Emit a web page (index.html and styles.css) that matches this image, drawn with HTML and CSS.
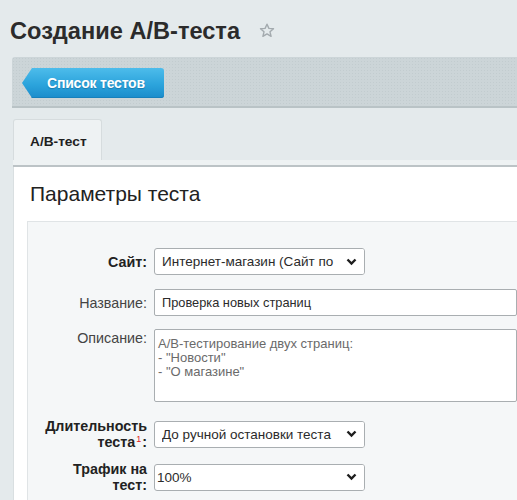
FILE: index.html
```html
<!DOCTYPE html>
<html lang="ru">
<head>
<meta charset="utf-8">
<title>Создание А/В-теста</title>
<link rel="stylesheet" href="styles.css">
</head>
<body>
<div class="title-row">
  <h1 class="page-title">Создание А/В-теста</h1>
  <svg class="star" width="16" height="15" viewBox="0 0 16 15"><path d="M8 1.2 L9.9 5.4 L14.5 5.8 L11 8.8 L12.1 13.3 L8 10.9 L3.9 13.3 L5 8.8 L1.5 5.8 L6.1 5.4 Z" fill="none" stroke="#a3aaae" stroke-width="1.4" stroke-linejoin="round"/></svg>
</div>
<div class="toolbar">
  <a class="back-btn">Список тестов</a>
</div>
<div class="tabs">
  <div class="tab">А/В-тест</div>
</div>
<div class="tab-strip"></div>
<div class="panel">
  <h2 class="section-title">Параметры теста</h2>
  <div class="form">
    <div class="row">
      <label class="lbl lbl-bold">Сайт:</label>
      <span class="select-wrap">
        <select class="select"><option>Интернет-магазин (Сайт по умолчанию)</option></select>
        <span class="chev"><svg width="11" height="8" viewBox="0 0 11 8"><path d="M1.5 1.5 L5.5 5.5 L9.5 1.5" fill="none" stroke="#1e1e1e" stroke-width="2.4"/></svg></span>
      </span>
    </div>
    <div class="row gap14">
      <label class="lbl">Название:</label>
      <input class="text-input" type="text" value="Проверка новых страниц">
    </div>
    <div class="row row-top gap13">
      <label class="lbl lbl-top">Описание:</label>
      <textarea class="textarea">А/В-тестирование двух страниц:
- "Новости"
- "О магазине"</textarea>
    </div>
    <div class="row gap16">
      <label class="lbl lbl-bold">Длительность теста<sup class="note">1</sup>:</label>
      <span class="select-wrap">
        <select class="select"><option>До ручной остановки теста</option></select>
        <span class="chev"><svg width="11" height="8" viewBox="0 0 11 8"><path d="M1.5 1.5 L5.5 5.5 L9.5 1.5" fill="none" stroke="#1e1e1e" stroke-width="2.4"/></svg></span>
      </span>
    </div>
    <div class="row gap11">
      <label class="lbl lbl-bold">Трафик на тест:</label>
      <span class="select-wrap">
        <select class="select select-tight"><option>100%</option></select>
        <span class="chev"><svg width="11" height="8" viewBox="0 0 11 8"><path d="M1.5 1.5 L5.5 5.5 L9.5 1.5" fill="none" stroke="#1e1e1e" stroke-width="2.4"/></svg></span>
      </span>
    </div>
  </div>
</div>
</body>
</html>
```

FILE: styles.css
```css
html, body {
  margin: 0;
  padding: 0;
  overflow: hidden;
}
body {
  background: #e4eaec;
  font-family: "Liberation Sans", Arial, sans-serif;
  color: #222;
  width: 517px;
  height: 500px;
}
.title-row {
  display: flex;
  align-items: center;
  height: 28px;
  margin: 17px 0 12px 10px;
}
.page-title {
  margin: 0;
  font-size: 23.6px;
  font-weight: bold;
  color: #2b2b2b;
  line-height: 28px;
}
.star {
  margin-left: 19px;
  margin-top: -1px;
}
.toolbar {
  margin-left: 12px;
  height: 38px;
  padding: 11px 0 0 10px;
  border-bottom: 2px solid #b9c3c6;
  border-radius: 3px 0 0 0;
  background-color: #ccd5d8;
  background-image: radial-gradient(circle, #c2cccf 0.8px, transparent 1px);
  background-size: 3px 3px;
  display: flex;
  align-items: flex-start;
}
.back-btn {
  display: block;
  box-sizing: border-box;
  width: 142px;
  height: 30px;
  line-height: 30px;
  padding-left: 25px;
  font-size: 14px;
  font-weight: bold;
  color: #fff;
  letter-spacing: -0.2px;
  text-shadow: 0 1px 1px rgba(0, 60, 100, 0.35);
  background: linear-gradient(#4dbceb, #2ca4dc 55%, #1b8ccb);
  border-radius: 0 3px 3px 0;
  box-shadow: inset 0 -1px 0 #1780bb;
  clip-path: polygon(10px 0, 100% 0, 100% 100%, 10px 100%, 0 50%);
}
.tabs {
  margin-left: 13px;
  padding-top: 11px;
  display: flex;
}
.tab {
  box-sizing: border-box;
  width: 89px;
  height: 41px;
  line-height: 44px;
  padding-left: 16px;
  font-size: 13.7px;
  font-weight: bold;
  color: #1f1f1f;
  background: #eef2f3;
  border: 1px solid #d6dcde;
  border-bottom: none;
  border-radius: 3px 3px 0 0;
}
.tab-strip {
  margin-left: 13px;
  height: 5px;
  background: #eef2f3;
  border-bottom: 2px solid #bcc3c6;
}
.panel {
  margin-left: 13px;
  background: #fff;
  border-left: 1px solid #d9dfe1;
  padding-left: 13px;
  height: 400px;
}
.section-title {
  margin: 0;
  padding: 15px 0 15px 3px;
  font-size: 21px;
  font-weight: normal;
  line-height: 24px;
  color: #222;
}
.form {
  background: #f5f7f8;
  border-top: 1px solid #e0e4e6;
  border-left: 1px solid #e0e4e6;
  padding-top: 26px;
  height: 300px;
}
.row {
  display: flex;
  align-items: center;
}
.row-top {
  align-items: flex-start;
}
.gap11 { margin-top: 11px; }
.gap13 { margin-top: 13px; }
.gap14 { margin-top: 14px; }
.gap16 { margin-top: 16px; }
.lbl {
  box-sizing: border-box;
  width: 119px;
  flex: none;
  margin-right: 7px;
  padding-left: 15px;
  text-align: right;
  font-size: 14.3px;
  line-height: 16px;
  color: #444;
}
.lbl-bold {
  font-weight: bold;
  color: #222;
}
.lbl-top {
  padding-top: 1px;
}
.note {
  color: #e02020;
  font-size: 9px;
  font-weight: normal;
  vertical-align: top;
  line-height: 10px;
  margin: 0 1px 0 1px;
}
.select-wrap {
  position: relative;
  display: block;
  width: 211px;
  height: 27px;
}
.select {
  appearance: none;
  -webkit-appearance: none;
  box-sizing: border-box;
  width: 211px;
  height: 27px;
  margin: 0;
  padding: 0 26px 0 7px;
  font-family: "Liberation Sans", Arial, sans-serif;
  font-size: 13.5px;
  color: #2b2b2b;
  background: #fff;
  border: 1px solid #a9aeb1;
  border-radius: 3px;
  outline: none;
}
.select-tight {
  padding-left: 2px;
}
.chev {
  position: absolute;
  right: 1px;
  top: 1px;
  box-sizing: border-box;
  width: 30px;
  height: 25px;
  display: flex;
  align-items: center;
  justify-content: flex-end;
  padding-right: 7px;
  background: #fff;
  border-radius: 0 2px 2px 0;
  pointer-events: none;
}
.text-input {
  box-sizing: border-box;
  width: 420px;
  height: 27px;
  margin: 0;
  padding: 0 7px;
  font-family: "Liberation Sans", Arial, sans-serif;
  font-size: 12.8px;
  color: #2b2b2b;
  background: #fff;
  border: 1px solid #a9aeb1;
  border-radius: 2px;
  outline: none;
}
.textarea {
  box-sizing: border-box;
  width: 420px;
  height: 73px;
  margin: 0;
  padding: 7px 3px;
  font-family: "Liberation Sans", Arial, sans-serif;
  font-size: 13px;
  line-height: 14px;
  color: #6a6a6a;
  background: #fff;
  border: 1px solid #a9aeb1;
  border-radius: 2px;
  resize: none;
  outline: none;
}
```
